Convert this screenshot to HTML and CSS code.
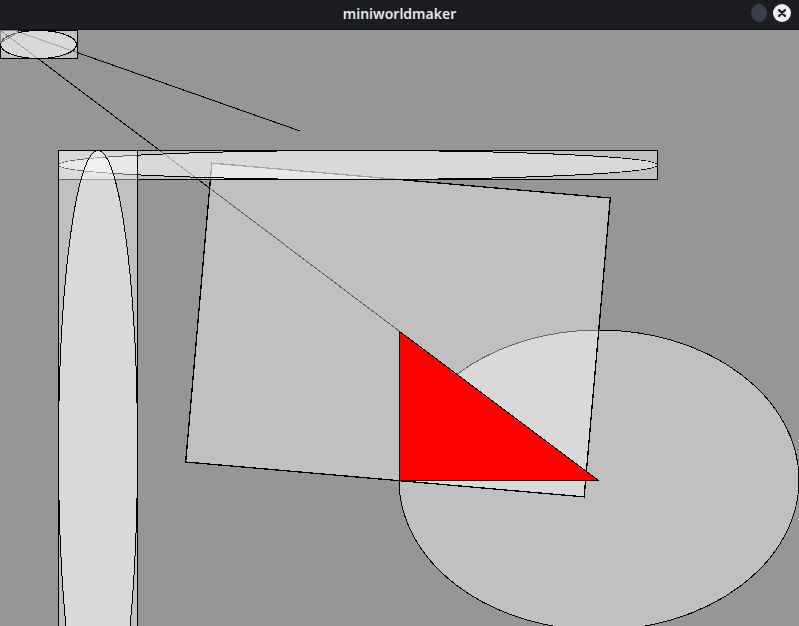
FILE: index.html
```html
<!DOCTYPE html>
<html>
<head>
<meta charset="utf-8">
<link rel="stylesheet" href="styles.css">
</head>
<body>
<div class="window">
  <header class="titlebar">
    <span class="title">miniworldmaker</span>
    <div class="controls">
      <span class="btn-min"></span>
      <span class="btn-close">
        <svg width="18" height="18" viewBox="0 0 18 18"><circle cx="9" cy="9" r="9" fill="#f2f2f2"/><path d="M6 6 L12 12 M12 6 L6 12" stroke="#1c1d22" stroke-width="2.2" stroke-linecap="round"/></svg>
      </span>
    </div>
  </header>
  <div class="canvas">
    <svg class="scene" width="799" height="596" viewBox="0 0 799 596">
      <rect x="0" y="0" width="799" height="596" fill="#969696"/>
      <line x1="0" y1="0" x2="399" y2="301" stroke="#000" stroke-width="1"/>
      <line x1="16" y1="1" x2="300" y2="101" stroke="#000" stroke-width="1"/>
      <ellipse cx="599" cy="450" rx="200" ry="150" fill="#fff" fill-opacity="0.4" stroke="#000"/>
      <rect x="-200" y="-150" width="400" height="300" transform="translate(398 300) rotate(5)" fill="#fff" fill-opacity="0.4" stroke="#000" stroke-width="1.3"/>
      <rect x="58.5" y="120.5" width="599" height="29" fill="#fff" fill-opacity="0.4" stroke="#000"/>
      <ellipse cx="358" cy="135" rx="299.5" ry="14.5" fill="#fff" fill-opacity="0.4" stroke="#000"/>
      <rect x="58.5" y="120.5" width="79" height="600" fill="#fff" fill-opacity="0.4" stroke="#000"/>
      <ellipse cx="98" cy="420.5" rx="39.5" ry="300" fill="#fff" fill-opacity="0.4" stroke="#000"/>
      <polygon points="399,301 399,450 598,450" fill="#ff0000" stroke="#000"/>
      <rect x="0" y="0.5" width="77" height="28" fill="#fff" fill-opacity="0.4" stroke="#000"/>
      <ellipse cx="38.5" cy="14.5" rx="38" ry="14" fill="#fff" fill-opacity="0.4" stroke="#000"/>
      <polygon points="0,0.5 17,0.5 17,3 0,13" fill="#fff" fill-opacity="0.3" stroke="#888"/>
    </svg>
  </div>
</div>
</body>
</html>
```

FILE: styles.css
```css
html, body {
  margin: 0;
  padding: 0;
  background: #969696;
  overflow: hidden;
}
.window {
  width: 799px;
  height: 626px;
  display: flex;
  flex-direction: column;
}
.titlebar {
  position: relative;
  height: 30px;
  flex: 0 0 30px;
  background: #1c1d22;
  display: flex;
  align-items: center;
  justify-content: center;
  box-sizing: border-box;
  border-bottom: 1px solid #111;
}
.title {
  font-family: "Noto Sans", "DejaVu Sans", sans-serif;
  font-size: 14px;
  font-weight: 600;
  color: #e6e6e6;
  line-height: 1;
  margin-top: -2px;
}
.controls {
  position: absolute;
  right: 8px;
  top: 4px;
  display: flex;
  align-items: center;
  gap: 6px;
}
.btn-min {
  width: 16px;
  height: 18px;
  border-radius: 50%;
  background: #3a3f4d;
  display: block;
}
.btn-close {
  width: 18px;
  height: 18px;
  display: block;
}
.btn-close svg {
  display: block;
}
.canvas {
  flex: 1;
  overflow: hidden;
}
.scene {
  display: block;
  shape-rendering: crispEdges;
}
```
